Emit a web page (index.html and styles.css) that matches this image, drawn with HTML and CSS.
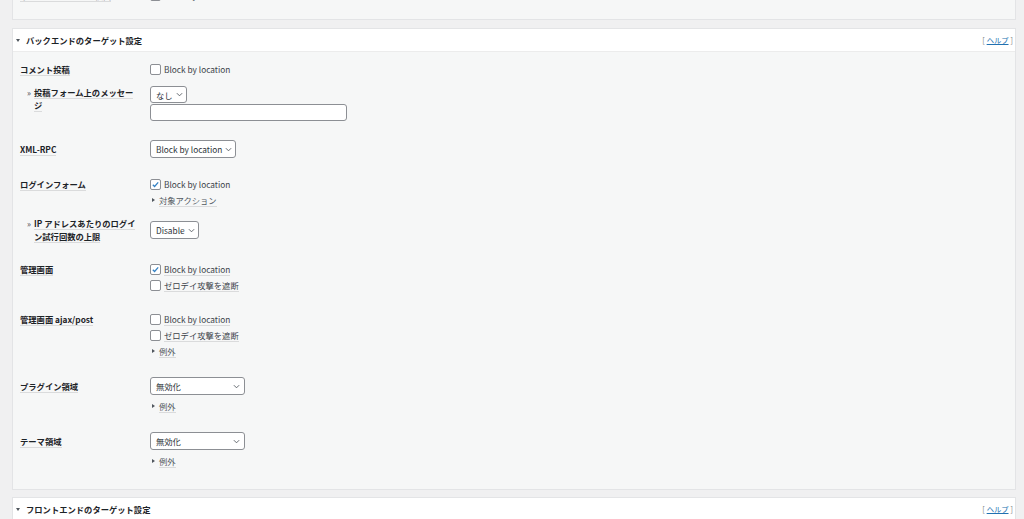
FILE: index.html
```html
<!DOCTYPE html>
<html>
<head>
	<meta charset="utf-8">
	<title>バックエンドのターゲット設定</title>
	<link rel="stylesheet" href="styles.css">
</head>
<body>
<div class="wrap">

	<div class="postbox cut">
		<div class="inside">
			<div class="row">
				<div class="th"><span class="lbl">不正なリクエストの検出</span></div>
				<div class="td">
					<label class="line"><span class="cb"></span>Block by location</label>
				</div>
			</div>
		</div>
	</div>

	<div class="postbox">
		<div class="hndle">
			<span class="tri-down"></span>
			<h2>バックエンドのターゲット設定</h2>
			<span class="help">[<a href="javascript:;">ヘルプ</a>]</span>
		</div>
		<div class="inside">
			<!-- コメント -->
			<div class="row">
				<div class="th"><span class="lbl">コメント投稿</span></div>
				<div class="td">
					<label class="line"><span class="cb"></span>Block by location</label>
				</div>
			</div>
			<div class="row sub">
				<div class="th"><span class="raquo">»</span><span><span class="lbl">投稿フォーム上のメッセージ</span></span></div>
				<div class="td">
					<div class="select small">なし<svg viewBox="0 0 8 5"><path d="M1 1l3 3 3-3"/></svg></div>
					<div class="text-input"></div>
				</div>
			</div>
			<!-- XML-RPC -->
			<div class="row">
				<div class="th mid"><span class="lbl">XML-RPC</span></div>
				<div class="td">
					<div class="select">Block by location<svg viewBox="0 0 8 5"><path d="M1 1l3 3 3-3"/></svg></div>
				</div>
			</div>
			<!-- ログイン -->
			<div class="row">
				<div class="th"><span class="lbl">ログインフォーム</span></div>
				<div class="td">
					<label class="line"><span class="cb on"><svg viewBox="0 0 10 10"><path d="M2 5.2l2 2 4-4.6"/></svg></span>Block by location</label>
					<div class="tog"><span class="lbl">対象アクション</span></div>
				</div>
			</div>
			<div class="row sub">
				<div class="th"><span class="raquo">»</span><span><span class="lbl">IP アドレスあたりのログイン試行回数の上限</span></span></div>
				<div class="td pad">
					<div class="select">Disable<svg viewBox="0 0 8 5"><path d="M1 1l3 3 3-3"/></svg></div>
				</div>
			</div>
			<!-- 管理画面 -->
			<div class="row">
				<div class="th"><span class="lbl">管理画面</span></div>
				<div class="td">
					<label class="line"><span class="cb on"><svg viewBox="0 0 10 10"><path d="M2 5.2l2 2 4-4.6"/></svg></span><span class="lbl">Block by location</span></label>
					<label class="line"><span class="cb"></span><span class="lbl">ゼロデイ攻撃を遮断</span></label>
				</div>
			</div>
			<div class="row">
				<div class="th"><span class="lbl">管理画面 ajax/post</span></div>
				<div class="td">
					<label class="line"><span class="cb"></span><span class="lbl">Block by location</span></label>
					<label class="line"><span class="cb"></span><span class="lbl">ゼロデイ攻撃を遮断</span></label>
					<div class="tog"><span class="lbl">例外</span></div>
				</div>
			</div>
			<!-- プラグイン / テーマ -->
			<div class="row">
				<div class="th mid"><span class="lbl">プラグイン領域</span></div>
				<div class="td">
					<div class="select wide">無効化<svg viewBox="0 0 8 5"><path d="M1 1l3 3 3-3"/></svg></div>
					<div class="tog after-select"><span class="lbl">例外</span></div>
				</div>
			</div>
			<div class="row">
				<div class="th mid"><span class="lbl">テーマ領域</span></div>
				<div class="td">
					<div class="select wide">無効化<svg viewBox="0 0 8 5"><path d="M1 1l3 3 3-3"/></svg></div>
					<div class="tog after-select"><span class="lbl">例外</span></div>
				</div>
			</div>
		</div>
	</div>

	<div class="postbox">
		<div class="hndle">
			<span class="tri-down"></span>
			<h2>フロントエンドのターゲット設定</h2>
			<span class="help">[<a href="javascript:;">ヘルプ</a>]</span>
		</div>
		<div class="inside">
			<div class="row">
				<div class="th"><span class="lbl">パブリック領域</span></div>
				<div class="td">
					<label class="line"><span class="cb"></span>Block by location</label>
				</div>
			</div>
		</div>
	</div>

</div>
</body>
</html>
```

FILE: styles.css
```css
*{ box-sizing: border-box; }
body{
	margin: 0;
	background: #f0f0f1;
	font-family: "Noto Sans CJK JP", sans-serif;
	font-size: 8.3px;
	color: #1d2327;
	overflow: hidden;
}
.wrap{ padding: 0 8px 0 12px; }

/* パネル */
.postbox{
	background: #f6f7f7;
	border: 1px solid #e3e4e6;
	margin-bottom: 7px;
}
.postbox.cut{ margin-top: -23px; margin-bottom: 8px; }
.cut .inside{ padding-bottom: 7px; }
.hndle{
	display: flex; align-items: center;
	height: 23px;
	background: #fff;
	border-bottom: 1px solid #ececec;
	padding: 0 2px 0 3px;
}
.tri-down{
	width: 0; height: 0;
	border-left: 2.5px solid transparent;
	border-right: 2.5px solid transparent;
	border-top: 3px solid #50575e;
	margin-right: 6px;
}
.hndle h2{ flex: 1; margin: 0; font-size: 8.3px; font-weight: bold; }
.help{ font-size: 7.3px; color: #787c82; }
.help a{ color: #2271b1; margin: 0 2px; }

.inside{ padding: 0 7px 11px; }

/* 行 */
.row{ display: flex; padding: 9px 0; }
.row.sub{ padding: 0 0 10px; }
.th{
	width: 130px; flex: none;
	padding: 2px 10px 0 0;
	line-height: 12px;
	font-weight: bold;
}
.th.mid{ padding-top: 3px; }
.sub .th{ display: flex; padding-top: 0; line-height: 12.5px; }
.raquo{ width: 14px; flex: none; padding-left: 7px; font-weight: normal; color: #3c434a; }
.lbl{ border-bottom: 1px solid #dadbdc; }
.td{ display: flex; flex-direction: column; align-items: flex-start; }
.td.pad{ padding-top: 4px; }

/* 入力 */
.line{
	display: flex; align-items: center;
	height: 16px;
	color: #3c434a;
}
.cb{
	width: 11px; height: 11px;
	border: 1px solid #8c8f94; border-radius: 2px;
	background: #fff;
	margin-right: 3px;
	display: flex; align-items: center; justify-content: center;
}
.cb svg{ width: 9px; height: 9px; fill: none; stroke: #3582c4; stroke-width: 1.4; }
.tog{
	display: flex; align-items: center;
	height: 16px;
	padding-left: 2px;
	color: #50575e;
}
.tog::before{
	content: "";
	width: 0; height: 0;
	border-top: 2.5px solid transparent;
	border-bottom: 2.5px solid transparent;
	border-left: 3px solid #50575e;
	margin-right: 4px;
}
.tog.after-select{ margin-top: 3px; }
.select{
	display: flex; align-items: center; justify-content: space-between;
	height: 18px;
	padding: 0 3px 0 5px;
	border: 1px solid #8c8f94; border-radius: 3px;
	background: #fff;
	color: #2c3338;
	gap: 3px;
}
.select.small{ height: 17px; }
.select.wide{ width: 95px; padding-right: 4px; }
.select svg{ width: 7px; height: 5px; fill: none; stroke: #50575e; stroke-width: 1; }
.text-input{
	width: 197px; height: 17px;
	margin-top: 1px;
	border: 1px solid #8c8f94; border-radius: 3px;
	background: #fff;
}
```
